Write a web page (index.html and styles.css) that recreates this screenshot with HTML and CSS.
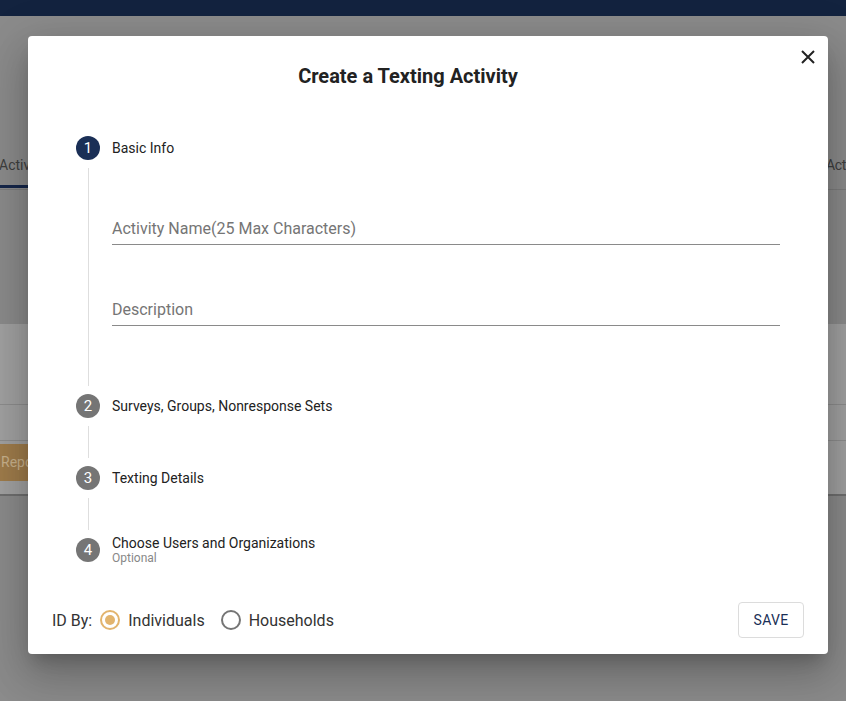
FILE: index.html
```html
<!DOCTYPE html>
<html>
<head>
<meta charset="utf-8">
<link rel="stylesheet" href="styles.css">
</head>
<body>
<div class="page">
  <div class="topbar"></div>
  <div class="spacer-a"></div>
  <div class="tabs">
    <div class="tab active">Activities</div>
    <div class="tab right">Act</div>
  </div>
  <div class="spacer-b"></div>
  <div class="panel">
    <div class="panel-top"></div>
    <div class="panel-row"></div>
    <div class="panel-btnrow"><span class="repo-btn">Reports</span></div>
    <div class="panel-bottom"></div>
  </div>
</div>

<div class="modal">
  <button class="close" aria-label="close">
    <svg width="16" height="16" viewBox="0 0 16 16"><path d="M2 2 L14 14 M14 2 L2 14" stroke="#222" stroke-width="2" fill="none"/></svg>
  </button>
  <h1 class="title">Create a Texting Activity</h1>

  <div class="stepper">
    <div class="step-header">
      <span class="num active">1</span>
      <span class="label">Basic Info</span>
    </div>
    <div class="step-content">
      <div class="field first"><span class="placeholder">Activity Name(25 Max Characters)</span></div>
      <div class="field"><span class="placeholder">Description</span></div>
    </div>
    <div class="step-header">
      <span class="num">2</span>
      <span class="label">Surveys, Groups, Nonresponse Sets</span>
    </div>
    <div class="connector"></div>
    <div class="step-header">
      <span class="num">3</span>
      <span class="label">Texting Details</span>
    </div>
    <div class="connector"></div>
    <div class="step-header">
      <span class="num">4</span>
      <span class="label two">Choose Users and Organizations<small>Optional</small></span>
    </div>
  </div>

  <div class="footer">
    <div class="idby">
      <span class="idlabel">ID By:</span>
      <label class="radio checked"><span class="ring"><span class="dot"></span></span>Individuals</label>
      <label class="radio"><span class="ring"></span>Households</label>
    </div>
    <button class="save">SAVE</button>
  </div>
</div>
</body>
</html>
```

FILE: styles.css
```css
* { box-sizing: border-box; }
html, body { margin: 0; padding: 0; }
body {
  width: 846px;
  height: 701px;
  overflow: hidden;
  background: #8b8b8b;
  font-family: Roboto, "Liberation Sans", sans-serif;
  position: relative;
}
.page { display: flex; flex-direction: column; }
.topbar { height: 16px; background: #13233f; }
.spacer-a { height: 140px; }
.tabs {
  height: 34px;
  display: flex;
  justify-content: space-between;
  border-bottom: 1px solid #7c7c7c;
  overflow: hidden;
}
.tab {
  font-size: 14px;
  color: #3e3e3e;
  line-height: 18px;
  height: 33px;
}
.tab.active {
  margin-left: -1px;
  width: 60px;
  border-bottom: 3px solid #15264a;
  height: 32px;
}
.tab.right { width: 20px; letter-spacing: -0.3px; white-space: nowrap; }
.spacer-b { height: 134px; }
.panel { background: #a1a1a1; display: flex; flex-direction: column; }
.panel-top { height: 81px; border-bottom: 1px solid #8d8d8d; }
.panel-row { height: 36px; border-bottom: 1px solid #8d8d8d; }
.panel-btnrow { height: 41px; padding-top: 3px; }
.repo-btn {
  display: inline-block;
  height: 37px;
  width: 60px;
  background: #9f7c4b;
  color: #c8b18c;
  font-size: 14px;
  line-height: 37px;
  padding-left: 1px;
}
.panel-bottom { height: 14px; border-bottom: 2px solid #6f6f6f; }

.modal {
  position: absolute;
  left: 28px;
  top: 36px;
  width: 800px;
  height: 618px;
  background: #fff;
  border-radius: 4px;
  box-shadow: 0 11px 15px -7px rgba(0,0,0,.2), 0 24px 38px 3px rgba(0,0,0,.14), 0 9px 46px 8px rgba(0,0,0,.12);
  display: flex;
  flex-direction: column;
}
.close {
  position: absolute;
  right: 12px;
  top: 13px;
  width: 16px;
  height: 16px;
  padding: 0;
  border: 0;
  background: none;
  display: flex;
}
.title {
  margin: 24px 40px 0 0;
  height: 32px;
  line-height: 32px;
  text-align: center;
  font-size: 20px;
  font-weight: 700;
  color: #222;
}
.stepper {
  margin-top: 36px;
  padding-left: 48px;
  display: flex;
  flex-direction: column;
}
.step-header {
  height: 40px;
  display: flex;
  align-items: center;
  gap: 12px;
}
.num {
  width: 24px;
  height: 24px;
  border-radius: 50%;
  background: #757575;
  color: #fff;
  font-size: 15px;
  display: flex;
  align-items: center;
  justify-content: center;
}
.num.active { background: #1a2f56; }
.label { font-size: 14px; color: #222; line-height: 18px; }
.label.two { display: flex; flex-direction: column; line-height: 16px; margin-top: -1px; }
.label small { font-size: 12px; color: #888; line-height: 14px; }
.step-content {
  margin-left: 12px;
  border-left: 1px solid #dedede;
  padding: 50px 48px 60px 23px;
  display: flex;
  flex-direction: column;
  gap: 54px;
}
.field {
  border-bottom: 1px solid #8a8a8a;
  padding-top: 1px;
  padding-bottom: 5px;
  height: 27px;
}
.placeholder { font-size: 16px; line-height: 20px; color: #757575; display: block; }
.connector {
  margin-left: 12px;
  height: 32px;
  border-left: 1px solid #dedede;
}
.footer {
  margin-top: 32px;
  padding: 0 24px 0 24px;
  display: flex;
  align-items: center;
  justify-content: space-between;
  height: 36px;
}
.idby { display: flex; align-items: center; font-size: 16px; color: #333; }
.idlabel { margin-right: 8px; }
.radio { display: flex; align-items: center; margin-right: 16px; }
.ring {
  width: 20px;
  height: 20px;
  border-radius: 50%;
  border: 2px solid #757575;
  margin-right: 8px;
  display: flex;
  align-items: center;
  justify-content: center;
}
.radio.checked .ring { border-color: #e2b46e; }
.dot { width: 10px; height: 10px; border-radius: 50%; background: #e2b46e; }
.save {
  width: 66px;
  height: 36px;
  border: 1px solid #dcdcdc;
  border-radius: 4px;
  background: #fff;
  color: #1a2f56;
  font-family: Roboto, "Liberation Sans", sans-serif;
  font-size: 14px;
  font-weight: 400;
  letter-spacing: 0.3px;
}
```
